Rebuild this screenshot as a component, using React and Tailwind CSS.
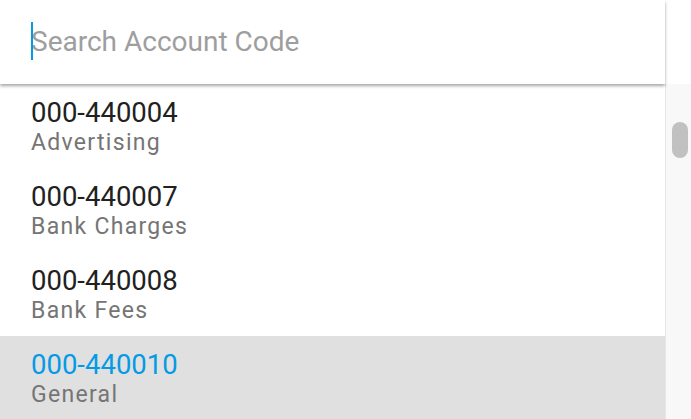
import React from "react";

const accounts = [
  { code: "000-440004", name: "Advertising" },
  { code: "000-440007", name: "Bank Charges" },
  { code: "000-440008", name: "Bank Fees" },
  { code: "000-440010", name: "General", active: true },
];

export default function App() {
  return (
    <div
      className="flex h-[419px] w-[691px] overflow-hidden bg-white"
      style={{ fontFamily: "Roboto, 'Noto Sans', sans-serif" }}
    >
      <div className="flex flex-1 flex-col">
        <div className="relative z-10 flex h-[84px] shrink-0 items-center bg-white pl-[31px] shadow-[0_2px_3px_rgba(0,0,0,0.35)]">
          <span className="absolute left-[31px] top-[22px] h-[38px] w-[2px] bg-[#039be5]" />
          <input
            className="w-full bg-transparent text-[28px] text-[#212121] outline-none placeholder:text-[#9e9e9e]"
            placeholder="Search Account Code"
          />
        </div>
        <div className="flex flex-col">
          {accounts.map((a) => (
            <div
              key={a.code}
              className={`flex h-[84px] shrink-0 flex-col justify-center pl-[31px] ${
                a.active ? "bg-[#e0e0e0]" : "bg-white"
              }`}
            >
              <div
                className={`text-[27.5px] leading-[32px] ${
                  a.active ? "text-[#039be5]" : "text-[#212121]"
                }`}
              >
                {a.code}
              </div>
              <div className="text-[23px] leading-[27px] tracking-[1.3px] text-[#757575]">
                {a.name}
              </div>
            </div>
          ))}
        </div>
      </div>
      <div className="flex w-[26px] flex-col">
        <div className="h-[84px] shrink-0 bg-white" />
        <div className="flex-1 border-l border-[#e6e6e6] bg-[#f8f8f8] pl-[6px] pt-[38px]">
          <div className="h-[36px] w-[16px] rounded-lg bg-[#c1c1c1]" />
        </div>
      </div>
    </div>
  );
}
